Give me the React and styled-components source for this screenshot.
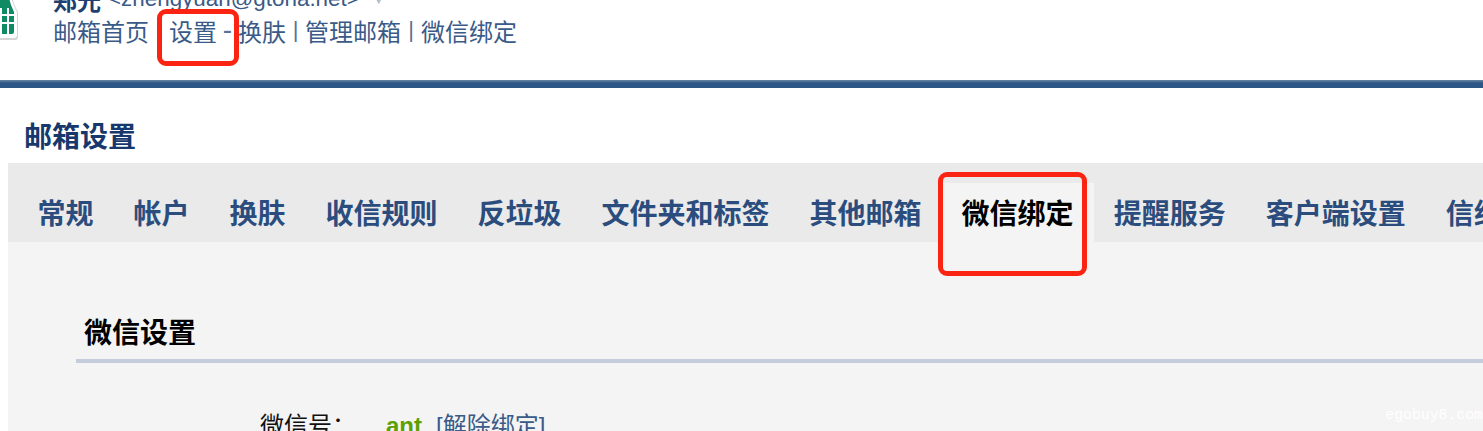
import styled, { createGlobalStyle } from "styled-components";

const GlobalStyle = createGlobalStyle`
  html, body {
    margin: 0;
    padding: 0;
    background: #fff;
  }
`;

const fontStack = `"Liberation Sans", "Noto Sans CJK SC", sans-serif`;

const Page = styled.div`
  position: relative;
  width: 1483px;
  height: 431px;
  overflow: hidden;
  background: #fff;
  font-family: ${fontStack};
`;

const Header = styled.header`
  display: flex;
  height: 80px;
  overflow: hidden;
`;

const Logo = styled.svg`
  flex: none;
  width: 53px;
  height: 44px;
`;

const UserBlock = styled.div`
  margin-top: -17px;
`;

const UserLine = styled.div`
  display: flex;
  align-items: center;
  height: 32px;
  font-size: 22.4px;
  color: #3a5a88;
`;

const UserName = styled.b`
  font-size: 24px;
  color: #1f3f70;
  margin-right: 7px;
`;

const Caret = styled.span`
  margin-left: 12px;
  font-size: 14px;
  color: #b4bcc8;
`;

const NavLine = styled.nav`
  display: flex;
  align-items: center;
  height: 32px;
  margin-top: -1px;
  font-size: 24px;
  color: #3a5a88;
`;

const NavItem = styled.span`
  position: relative;
`;

const NavSep = styled.span`
  width: ${(p) => p.$w}px;
  text-align: center;
  font-family: "Liberation Sans", sans-serif;
  font-size: ${(p) => p.$size || 22}px;
  opacity: 0.85;
`;

const Mark = styled.span`
  position: absolute;
  box-sizing: border-box;
  border: 5px solid #fb2412;
  border-radius: 9px;
  pointer-events: none;
  z-index: 2;
`;

const NavMark = styled(Mark)`
  left: -12px;
  top: -4px;
  width: 82px;
  height: 57px;
`;

const TabMark = styled(Mark)`
  left: -3.5px;
  top: -11px;
  width: 149px;
  height: 104px;
`;

const Bar = styled.div`
  height: 8px;
  background: linear-gradient(#6d87a5, #2b5686 40%);
`;

const Title = styled.h1`
  margin: 0;
  height: 75px;
  padding: 33px 0 0 24px;
  box-sizing: border-box;
  font-size: 28px;
  line-height: 34px;
  font-weight: 700;
  color: #17386c;
`;

const Panel = styled.main`
  margin-left: 8px;
  height: 268px;
  background: #f4f4f4;
`;

const TabStrip = styled.div`
  display: flex;
  height: 59px;
  padding: 20px 0 0 9.5px;
  background: #eaeaea;
  white-space: nowrap;
`;

const Tab = styled.div`
  position: relative;
  flex: none;
  padding: 0 20px;
  font-size: 28px;
  line-height: 64px;
  height: 59px;
  font-weight: 700;
  color: ${(p) => (p.$active ? "#000" : "#2a4d7e")};
  background: ${(p) => (p.$active ? "#f4f4f4" : "transparent")};
`;

const Section = styled.section`
  padding: 73px 0 0 68px;
`;

const SectionTitle = styled.h2`
  margin: 0;
  padding: 0 0 6px 8px;
  font-size: 28px;
  line-height: 38px;
  font-weight: 700;
  color: #000;
  border-bottom: 4px solid #c5cddd;
`;

const Row = styled.div`
  display: flex;
  align-items: baseline;
  margin-top: 46px;
  padding-left: 184px;
  font-size: 24px;
  line-height: 34px;
`;

const Label = styled.span`
  width: 126px;
  color: #111;
`;

const Account = styled.b`
  width: 50px;
  color: #5aa000;
`;

const Unbind = styled.span`
  color: #3a5a88;
`;

const Watermark = styled.div`
  position: absolute;
  right: 0;
  bottom: 8px;
  font-family: "Liberation Mono", monospace;
  font-size: 14.8px;
  line-height: 16px;
  color: #fff;
  white-space: nowrap;
`;

const tabs = [
  "常规",
  "帐户",
  "换肤",
  "收信规则",
  "反垃圾",
  "文件夹和标签",
  "其他邮箱",
  "微信绑定",
  "提醒服务",
  "客户端设置",
  "信纸",
];

const App = () => {
  return (
    <Page>
      <GlobalStyle />
      <Header>
        <Logo viewBox="0 0 53 44">
          <path d="M-6-2H12l3 8 3 6v25q0 3-3 3H-6z" fill="#d4d4d4" />
          <path d="M-6-2H11l3 8 3 6v23q0 3-3 3H-6z" fill="#fff" />
          <path d="M-6-2H9l2 7 3 7v20q0 2-2 2H-6z" fill="#0f8a63" />
          <path d="M0 8h2v26H0zM7 8h2v26H7zM-6 14h20v2H-6zM-6 22h20v2H-6z" fill="#fff" />
        </Logo>
        <UserBlock>
          <UserLine>
            <UserName>郑光</UserName>
            &lt;zhengyuan@gtona.net&gt;
            <Caret>▼</Caret>
          </UserLine>
          <NavLine>
            <NavItem>邮箱首页</NavItem>
            <NavSep $w={20}>|</NavSep>
            <NavItem>
              设置
              <NavMark />
            </NavItem>
            <NavSep $w={21} $size={28}>-</NavSep>
            <NavItem>换肤</NavItem>
            <NavSep $w={19}>|</NavSep>
            <NavItem>管理邮箱</NavItem>
            <NavSep $w={20}>|</NavSep>
            <NavItem>微信绑定</NavItem>
          </NavLine>
        </UserBlock>
      </Header>
      <Bar />
      <Title>邮箱设置</Title>
      <Panel>
        <TabStrip>
          {tabs.map((t) => (
            <Tab key={t} $active={t === "微信绑定"}>
              {t}
              {t === "微信绑定" && <TabMark />}
            </Tab>
          ))}
        </TabStrip>
        <Section>
          <SectionTitle>微信设置</SectionTitle>
          <Row>
            <Label>微信号：</Label>
            <Account>ant</Account>
            <Unbind>[解除绑定]</Unbind>
          </Row>
        </Section>
      </Panel>
      <Watermark>egobuy8.com</Watermark>
    </Page>
  );
};

export default App;
